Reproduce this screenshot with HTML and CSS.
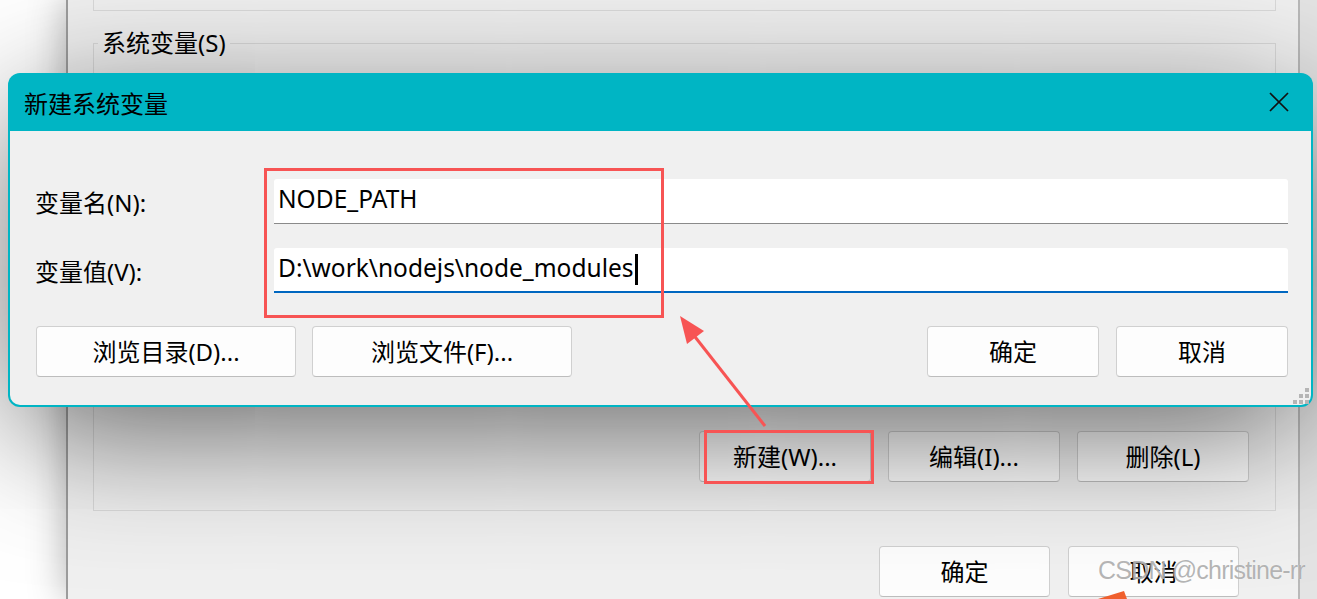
FILE: index.html
```html
<!DOCTYPE html>
<html lang="zh-CN">
<head>
    <meta charset="UTF-8">
    <meta name="viewport" content="width=device-width, initial-scale=1.0">
    <title>新建系统变量</title>
    <link rel="stylesheet" href="styles.css">
</head>
<body>
    <div class="desk">
        <div class="desk-left"></div>
        <div class="env-window">
            <div class="user-group"></div>
            <fieldset class="sys-group">
                <legend>系统变量(S)</legend>
                <div class="list-actions">
                    <button class="btn">新建(W)...</button>
                    <button class="btn">编辑(I)...</button>
                    <button class="btn">删除(L)</button>
                </div>
            </fieldset>
            <div class="env-footer">
                <button class="btn">确定</button>
                <button class="btn">取消</button>
            </div>
        </div>
        <div class="desk-right"></div>
    </div>

    <!-- 新建系统变量 对话框 -->
    <div class="dialog">
        <div class="dialog-title">
            <span>新建系统变量</span>
            <svg class="close-icon" viewBox="0 0 20 20"><path d="M1 1L19 19M19 1L1 19"/></svg>
        </div>
        <div class="dialog-body">
            <div class="form-grid">
                <label>变量名(N):</label>
                <div class="field">NODE_PATH</div>
                <label>变量值(V):</label>
                <div class="field field-active">D:\work\nodejs\node_modules<span class="caret"></span></div>
            </div>
            <div class="dialog-actions">
                <button class="btn btn-wide">浏览目录(D)...</button>
                <button class="btn btn-wide">浏览文件(F)...</button>
                <button class="btn push">确定</button>
                <button class="btn">取消</button>
            </div>
            <svg class="grip" viewBox="0 0 16 16">
                <rect x="12" y="0" width="4" height="4"/>
                <rect x="6" y="6" width="4" height="4"/>
                <rect x="12" y="6" width="4" height="4"/>
                <rect x="0" y="12" width="4" height="4"/>
                <rect x="6" y="12" width="4" height="4"/>
                <rect x="12" y="12" width="4" height="4"/>
            </svg>
        </div>
    </div>

    <!-- 标注 -->
    <svg class="marks" viewBox="0 0 1317 599">
        <rect x="265.5" y="169.5" width="397" height="147"/>
        <rect x="705.5" y="431.5" width="167" height="51"/>
        <line x1="765" y1="426" x2="692" y2="333"/>
        <polygon class="head" points="680,316 704,331 687,344"/>
        <polygon class="tail" points="1098,599 1124,591 1127,599"/>
    </svg>
    <div class="watermark">CSDN @christine-rr</div>
</body>
</html>
```

FILE: styles.css
```css
* {
    box-sizing: border-box;
}

body {
    margin: 0;
    width: 1317px;
    height: 599px;
    overflow: hidden;
    position: relative;
    background: #fff;
    font-family: "Noto Sans", "Noto Sans CJK SC", sans-serif;
    color: #000;
}

.desk {
    display: flex;
    height: 599px;
}

.desk-left {
    width: 66px;
    flex: none;
}

.desk-right {
    flex: 1;
    background: #e4e4e4;
}

.env-window {
    width: 1234px;
    flex: none;
    background: #f0f0f0;
    border-left: 2px solid #9c9c9c;
    border-right: 2px solid #b9b9b9;
    padding: 0 22px 0 25px;
    box-shadow: 0 0 36px rgba(0, 0, 0, 0.3);
}

.user-group {
    height: 11px;
    border: 1px solid #d9d9d9;
    border-top: none;
}

.sys-group {
    margin: 17px 0 0;
    padding: 0 26px 28px 0;
    height: 483px;
    border: 1px solid #d9d9d9;
    display: flex;
    flex-direction: column;
    justify-content: flex-end;
}

.sys-group legend {
    font-size: 24px;
    line-height: 30px;
    padding: 0 4px;
    margin-left: 4px;
}

.list-actions {
    display: flex;
    justify-content: flex-end;
    gap: 17px;
}

.list-actions .btn {
    width: 172px;
    height: 51px;
}

.env-footer {
    display: flex;
    justify-content: flex-end;
    gap: 18px;
    margin-top: 35px;
    padding-right: 37px;
}

.env-footer .btn {
    width: 171px;
    height: 51px;
}

.btn {
    font: inherit;
    font-size: 24px;
    color: #000;
    background: #fdfdfd;
    border: 1px solid #d0d0d0;
    border-bottom-color: #bdbdbd;
    border-radius: 4px;
    padding: 0 0 2px;
}

.dialog {
    position: absolute;
    left: 8px;
    top: 73px;
    width: 1305px;
    height: 334px;
    background: #00b5c4;
    border-radius: 12px;
    padding: 0 2px 2px;
    box-shadow: 0 30px 136px -10px rgba(0, 0, 0, 0.62);
    display: flex;
    flex-direction: column;
}

.dialog-title {
    height: 58px;
    flex: none;
    display: flex;
    align-items: center;
    justify-content: space-between;
    padding: 0 22px 0 14px;
    font-size: 24px;
}

.close-icon {
    width: 20px;
    height: 20px;
    stroke: #111;
    stroke-width: 1.7;
    fill: none;
}

.dialog-body {
    flex: 1;
    position: relative;
    background: #f0f0f0;
    border-radius: 0 0 10px 10px;
    padding: 48px 23px 0 25px;
}

.form-grid {
    display: grid;
    grid-template-columns: 239px 1fr;
    row-gap: 24px;
    align-items: center;
}

.form-grid label {
    font-size: 24px;
}

.field {
    height: 45px;
    display: flex;
    align-items: center;
    padding: 0 0 6px 4px;
    background: #fff;
    border-bottom: 1px solid #8a8a8a;
    border-radius: 3px 3px 0 0;
    font-size: 24.5px;
}

.field-active {
    border-bottom: 2px solid #0067c0;
    padding-bottom: 5px;
}

.caret {
    width: 3px;
    height: 31px;
    margin: 4px 0 0 1px;
    background: #000;
}

.dialog-actions {
    display: flex;
    gap: 16px;
    margin-top: 33px;
    padding-left: 1px;
}

.btn-wide {
    width: 260px;
    height: 51px;
}

.dialog-actions .btn {
    height: 51px;
}

.dialog-actions .btn:not(.btn-wide) {
    width: 172px;
}

.dialog-actions .btn:last-child {
    margin-left: 1px;
}

.push {
    margin-left: auto;
}

.grip {
    position: absolute;
    right: 2px;
    bottom: 1px;
    width: 16px;
    height: 16px;
    fill: #b5b5b5;
}

.marks {
    position: absolute;
    left: 0;
    top: 0;
    width: 1317px;
    height: 599px;
    pointer-events: none;
}

.marks rect,
.marks line {
    fill: none;
    stroke: #f75454;
    stroke-width: 3;
}

.marks .head {
    fill: #f75454;
}

.marks .tail {
    fill: #f0602e;
}

.watermark {
    position: absolute;
    left: 1098px;
    top: 556px;
    font-family: "Liberation Sans", sans-serif;
    font-size: 25px;
    letter-spacing: -0.8px;
    color: rgba(130, 130, 130, 0.6);
    text-shadow: 0 0 1px rgba(255, 255, 255, 0.9);
    white-space: nowrap;
}
```
